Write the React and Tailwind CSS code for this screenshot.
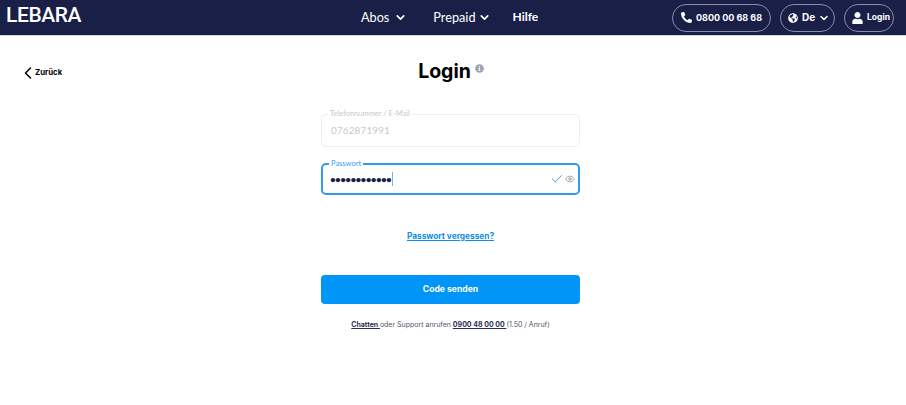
import React from 'react';
import { ChevronDown, ChevronLeft, Check, Eye } from 'lucide-react';
import { FaPhoneAlt, FaGlobeAmericas, FaUser, FaInfoCircle } from 'react-icons/fa';

const Pill = ({ className, children }) => (
    <div className={`flex h-[28px] items-center rounded-full border border-[#8b8ea6] text-white font-bold text-[10px] whitespace-nowrap ${className}`}>
        {children}
    </div>
);

const Field = ({ label, focused, children }) => (
    <div className={`relative flex items-center rounded-[5px] bg-white font-['Lato',sans-serif] ${focused ? 'h-[32px] border-2 border-[#2f9cf0] pl-[7px]' : 'h-[33px] border border-[#eeeeee] pl-[9px]'}`}>
        <span className={`absolute top-[-6px] left-[6px] bg-white px-[2px] text-[7.5px] leading-[10px] ${focused ? 'text-[#3a9df0]' : 'text-[#c9c9c9]'}`}>
            {label}
        </span>
        {children}
    </div>
);

export default function App() {
    return (
        <div className="min-h-[405px] bg-white font-['Inter',sans-serif]">
            <header className="flex h-[36px] items-center bg-[#1a1f47] border-b border-[#d5d6de]">
                <div className="w-[361px] pl-[6px] pb-[4px] font-['Roboto',sans-serif] text-[21px] font-medium leading-none tracking-[-0.4px] text-white">LEBARA</div>
                <nav className="flex items-center text-white font-['Lato',sans-serif] text-[12.7px]">
                    <span>Abos</span>
                    <ChevronDown className="ml-[5px] w-[13px] h-[13px]" strokeWidth={3} />
                    <span className="ml-[26px]">Prepaid</span>
                    <ChevronDown className="ml-[3px] w-[13px] h-[13px]" strokeWidth={3} />
                    <span className="ml-[21px] text-[12px] font-bold">Hilfe</span>
                </nav>
                <div className="ml-auto flex items-center gap-[9px] pr-[12px]">
                    <Pill className="w-[99px] pl-[8px]">
                        <FaPhoneAlt className="w-[11px] h-[11px]" />
                        <span className="ml-[4px] text-[9px]">0800 00 68 68</span>
                    </Pill>
                    <Pill className="w-[55px] pl-[7px]">
                        <FaGlobeAmericas className="w-[10px] h-[10px]" />
                        <span className="ml-[4px]">De</span>
                        <ChevronDown className="ml-[3px] w-[12px] h-[12px]" strokeWidth={3} />
                    </Pill>
                    <Pill className="w-[50px] pl-[7px]">
                        <FaUser className="w-[11px] h-[12px]" />
                        <span className="ml-[4px] text-[8.5px]">Login</span>
                    </Pill>
                </div>
            </header>
            <main className="grid grid-cols-[321px_259px_1fr] pt-[22px]">
                <div className="flex items-start pl-[18px] pt-[5px]">
                    <div className="flex items-center text-[7.8px] font-bold text-black">
                        <ChevronLeft className="w-[20px] h-[20px]" strokeWidth={1.8} />
                        <span className="ml-[-3px]">Zurück</span>
                    </div>
                </div>
                <div className="flex flex-col">
                    <div className="flex h-[28px] items-center justify-center pl-[1px]">
                        <h1 className="text-[19.5px] font-bold text-black leading-none">Login</h1>
                        <FaInfoCircle className="ml-[4px] mb-[7px] w-[9px] h-[9px] text-[#9aa5b1]" />
                    </div>
                    <div className="mt-[28px]">
                        <Field label="Telefonnummer / E-Mail">
                            <span className="text-[10px] tracking-[0.1px] text-[#c9c9c9]">0762871991</span>
                        </Field>
                    </div>
                    <div className="mt-[16px]">
                        <Field label="Passwort" focused>
                            <span className="text-[10px] tracking-[-0.7px] text-[#1a1f47] font-bold">••••••••••••</span>
                            <span className="ml-[1px] h-[14px] w-[1px] bg-[#6db8f2]" />
                            <Check className="ml-auto w-[14px] h-[14px] text-[#1f8fe8]" strokeWidth={1.5} />
                            <Eye className="ml-[1px] mr-[3px] w-[10px] h-[10px] text-[#999999]" strokeWidth={2} />
                        </Field>
                    </div>
                    <a className="mt-[34px] text-center text-[8.3px] font-bold leading-[14px] text-[#0f8cf0] underline">Passwort vergessen?</a>
                    <button className="mt-[32px] flex h-[29px] items-center justify-center rounded-[4px] bg-[#0095f6] text-[8.6px] font-bold text-white">Code senden</button>
                    <p className="mt-[16px] text-center text-[7px] leading-[10px] whitespace-nowrap text-[#53566c]">
                        <span className="font-bold text-[#2b2f50] underline">Chatten </span>
                        oder Support anrufen{' '}
                        <span className="font-bold text-[#2b2f50] underline">0900 48 00 00 </span>
                        (1.50 / Anruf)
                    </p>
                </div>
            </main>
        </div>
    );
}
